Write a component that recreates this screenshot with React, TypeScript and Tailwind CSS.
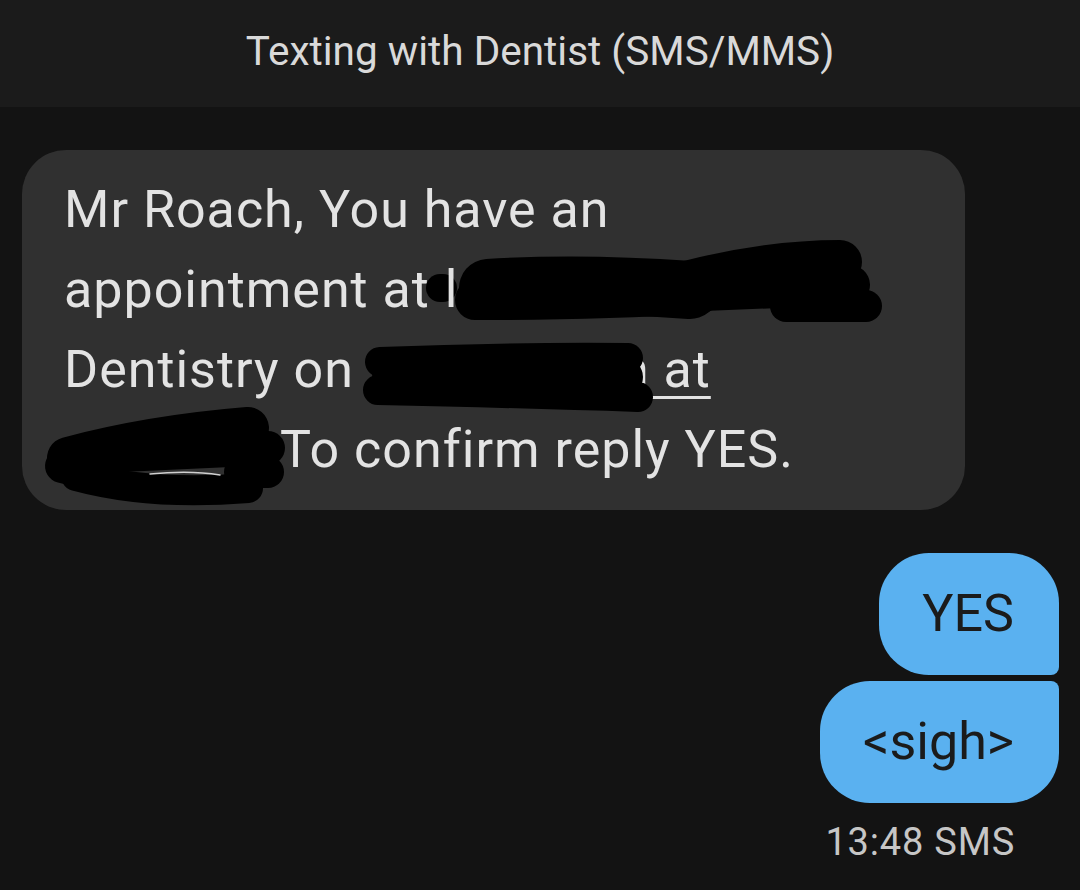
const font = { fontFamily: "Roboto, 'Noto Sans', sans-serif" };

function Redactions() {
  // black marker scribbles drawn over the incoming message; viewBox uses page coordinates
  return (
    <svg
      className="absolute left-0 top-0 pointer-events-none"
      width={943}
      height={360}
      viewBox="22 150 943 360"
      fill="none"
      stroke="#000"
      strokeLinecap="round"
      strokeLinejoin="round"
    >
      {/* line 2 */}
      <path d="M440 288 L443 288" strokeWidth={28} />
      <path d="M488 288 Q580 282 690 290" strokeWidth={58} />
      <path d="M475 300 Q600 300 700 294" strokeWidth={40} />
      <path d="M690 282 Q770 262 840 262" strokeWidth={44} />
      <path d="M680 292 L850 285" strokeWidth={40} />
      <path d="M786 306 L866 306" strokeWidth={32} />
      {/* line 3 */}
      <path d="M380 362 Q500 357 628 358" strokeWidth={30} />
      <path d="M378 390 Q520 393 638 397" strokeWidth={30} />
      <path d="M390 377 L625 377" strokeWidth={36} />
      {/* line 4 */}
      <path d="M68 458 Q150 436 248 428" strokeWidth={42} />
      <path d="M238 448 L268 448" strokeWidth={34} />
      <path d="M240 472 L268 472" strokeWidth={32} />
      <path d="M76 476 Q150 496 248 488" strokeWidth={30} />
      <path d="M62 466 L110 478" strokeWidth={34} />
      <path d="M100 458 L230 452" strokeWidth={30} />
      <path d="M150 474 Q190 470 220 475" stroke="#d0d0d0" strokeWidth={1.5} />
    </svg>
  );
}

export default function App() {
  return (
    <div className="w-[1080px] h-[890px] bg-[#131313] overflow-hidden" style={font}>
      <div className="h-[107px] bg-[#1b1b1b] flex items-center justify-center">
        <h1 className="text-[40.5px] leading-none text-[#d9d9d9] font-normal pb-[4px]">
          Texting with Dentist (SMS/MMS)
        </h1>
      </div>

      <div className="px-[21px] pt-[43px] flex flex-col">
        <div className="relative w-[943px] ml-[1px] bg-[#303030] rounded-[44px] px-[42px] py-[20px] text-[52px] leading-[80px] tracking-[1px] text-[#e3e3e3]">
          <div>Mr Roach, You have an</div>
          <div>
            appointment at<span className="relative z-10 inline-block ml-[15px]">l</span>
          </div>
          <div className="whitespace-pre">
            Dentistry on<span className="inline-block w-[266px]"></span>
            <span className="underline decoration-[3px] underline-offset-[9px]">n at</span>
          </div>
          <div className="whitespace-pre">
            <span className="inline-block w-[216px]"></span>To confirm reply YES.
          </div>
          <Redactions />
        </div>

        <div className="mt-[43px] flex flex-col items-end gap-[6px]">
          <div className="bg-[#5ab1f0] text-[#1b1b1b] text-[52px] leading-[80px] py-[21px] pl-[43px] pr-[45px] rounded-[50px] rounded-br-[8px]">
            YES
          </div>
          <div className="bg-[#5ab1f0] text-[#1b1b1b] text-[52px] leading-[80px] py-[21px] pl-[43px] pr-[45px] rounded-[50px] rounded-tr-[8px]">
            &lt;sigh&gt;
          </div>
          <div className="mt-[9px] pr-[44px] text-[38px] leading-[48px] tracking-[0.8px] text-[#c6c6c6]">13:48 SMS</div>
        </div>
      </div>
    </div>
  );
}
